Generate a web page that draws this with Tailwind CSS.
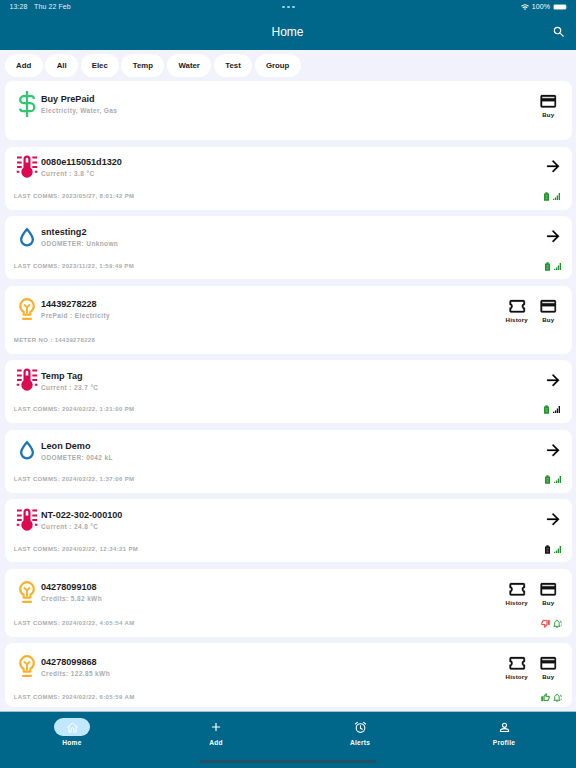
<!DOCTYPE html>
<html lang="en">
<head>
<meta charset="utf-8">
<title>Home</title>
<script src="https://cdn.jsdelivr.net/npm/@tailwindcss/browser@4"></script>
</head>
<body class="w-[576px] h-[768px] overflow-hidden bg-[#f1f2fb] font-['Liberation_Sans',Arial,sans-serif]">
<svg class="hidden" xmlns="http://www.w3.org/2000/svg">
  <symbol id="card" viewBox="0 0 24 24"><path d="M20,8H4V6H20M20,18H4V12H20M20,4H4C2.89,4 2,4.89 2,6V18C2,19.1 2.9,20 4,20H20A2,2 0 0,0 22,18V6C22,4.89 21.1,4 20,4Z" stroke="currentColor" stroke-width=".4"/></symbol>
  <symbol id="ticket" viewBox="0 0 24 24"><path d="M4,4A2,2 0 0,0 2,6V10A2,2 0 0,1 4,12A2,2 0 0,1 2,14V18A2,2 0 0,0 4,20H20A2,2 0 0,0 22,18V14A2,2 0 0,1 20,12A2,2 0 0,1 22,10V6A2,2 0 0,0 20,4H4M4,6H20V8.54C18.76,9.25 18,10.57 18,12C18,13.43 18.76,14.75 20,15.46V18H4V15.46C5.24,14.75 6,13.43 6,12C6,10.57 5.24,9.25 4,8.54V6Z" stroke="currentColor" stroke-width=".4"/></symbol>
  <symbol id="arrow" viewBox="0 0 24 24"><path d="M4,11V13H16L10.5,18.5L11.92,19.92L19.84,12L11.92,4.08L10.5,5.5L16,11H4Z" stroke="currentColor" stroke-width=".3"/></symbol>
  <symbol id="drop" viewBox="0 0 24 24"><path d="M12,3.77L11.25,4.61C11.25,4.61 9.97,6.06 8.68,7.94C7.39,9.82 6,12.07 6,14.23A6,6 0 0,0 12,20.23A6,6 0 0,0 18,14.23C18,12.07 16.61,9.82 15.32,7.94C14.03,6.06 12.75,4.61 12.75,4.61L12,3.77M12,6.9C12.44,7.42 12.84,7.85 13.68,9.07C14.89,10.83 16,13.07 16,14.23C16,16.45 14.22,18.23 12,18.23C9.78,18.23 8,16.45 8,14.23C8,13.07 9.11,10.83 10.32,9.07C11.16,7.85 11.56,7.42 12,6.9Z"/></symbol>
  <symbol id="bulb" viewBox="0 0 28 28"><g fill="none" stroke="currentColor" stroke-width="2.200"><path d="M10.600 19.600V16.800C8.500 15.500 7.200 13.400 7.200 11a6.800 6.800 0 0 1 13.600 0c0 2.400-1.300 4.500-3.400 5.800v2.800z" stroke-linejoin="round"/><path d="M14 18.500V12.500M11 9.500L14 12.500L17 9.500" stroke-width="1.900"/><path d="M10 23.800h8" stroke-linecap="round"/></g></symbol>
  <symbol id="temp" viewBox="0 0 28 28"><path fill-rule="evenodd" d="M14 2.400a3.500 3.500 0 0 1 3.500 3.500v8.600a5.700 5.700 0 1 1-7 0V5.900A3.500 3.500 0 0 1 14 2.400zm0 2.300a1.300 1.300 0 0 0-1.300 1.300v3.400h2.600V6A1.300 1.300 0 0 0 14 4.700z"/><path d="M4 4.500h4.700M4 9.400h4.700M4 14.100h4.700M3.700 18.800h2.600M19.300 4.500H24.200M19.300 9.400H24.200M19.300 14.100H24.200M21.900 18.800h2.500" stroke="currentColor" stroke-width="2" fill="none"/></symbol>
  <symbol id="dollar" viewBox="0 0 28 28"><path d="M14 1v26M20.800 9V8.500A2.500 2.500 0 0 0 18.300 6.200H10.700a3.500 3.500 0 0 0 0 7H17.300a4 4 0 0 1 0 8H9.700A2.700 2.700 0 0 1 7.100 18.700" fill="none" stroke="currentColor" stroke-width="2.300"/></symbol>
  <symbol id="battery" viewBox="0 0 12 16"><path d="M4 .5h4v2h2.500v13h-9v-13H4z"/><path d="M4 6h4M4 9h4M4 12h4" stroke="#fff" stroke-opacity=".5" stroke-width="1.300"/></symbol>
  <symbol id="signal" viewBox="0 0 14 14"><path d="M0 11.500h2.500V14H0zM3.800 9h2.600v5H3.800zM7.500 5h2.600v9H7.500zM11.300 0H14v14h-2.700z"/></symbol>
  <symbol id="up" viewBox="0 0 24 24"><path d="M5,9V21H1V9H5M9,21A2,2 0 0,1 7,19V9C7,8.45 7.22,7.95 7.590,7.590L14.170,1L15.230,2.060C15.500,2.330 15.670,2.700 15.670,3.110L15.640,3.430L14.690,8H21C22.110,8 23,8.900 23,10V12C23,12.260 22.950,12.500 22.860,12.730L19.840,19.780C19.540,20.500 18.830,21 18,21H9M9,19H18.030L21,12V10H12.210L13.340,4.680L9,9.030V19Z" stroke="currentColor" stroke-width=".8"/></symbol>
  <symbol id="down" viewBox="0 0 24 24"><path d="M19,15V3H23V15H19M15,3A2,2 0 0,1 17,5V15C17,15.550 16.780,16.050 16.410,16.410L9.830,23L8.770,21.940C8.500,21.670 8.330,21.300 8.330,20.880L8.360,20.570L9.310,16H3C1.890,16 1,15.100 1,14V12C1,11.740 1.050,11.500 1.140,11.270L4.160,4.220C4.460,3.500 5.170,3 6,3H15M15,5H5.970L3,12V14H11.780L10.650,19.320L15,14.970V5Z" stroke="currentColor" stroke-width=".8"/></symbol>
  <symbol id="bell" viewBox="0 0 24 24"><g fill="none" stroke="currentColor" stroke-width="2.400"><path d="M1.500 19.500h18M4.500 19V11c0-3.500 2.500-6 6-6.500s6 3 6 6.500v8M10.500 4.500V2"/><path d="M8.500 22h4M18.500 4c2.500 2 3.500 4 3.500 7M22 15v3" /></g></symbol>
</svg>
<div class="flex h-full flex-col">
  <header class="h-[50px] shrink-0 bg-[#00668a] text-white">
    <div class="grid h-[14px] grid-cols-3 items-center pl-[9.500px] pr-[8.500px] text-[7px] leading-[14px]">
      <div class="flex gap-[6.500px] text-[#e0f2fa] tracking-[0.1px]"><span>13:28</span><span>Thu 22 Feb</span></div>
      <div class="flex justify-center gap-[2px]"><i class="size-[2.700px] rounded-full bg-[#8fd3f0]"></i><i class="size-[2.700px] rounded-full bg-[#8fd3f0]"></i><i class="size-[2.700px] rounded-full bg-[#8fd3f0]"></i></div>
      <div class="flex items-center justify-end gap-[2.500px]">
        <svg class="h-[6px] w-[8px]" viewBox="0 0 16 12" fill="none" stroke="#fff" stroke-width="2.400"><path d="M1 4.500q7-6 14 0M3.600 7.600q4.400-3.700 8.800 0"/><path d="M8 12L5.500 9.700q2.500-1.800 5 0z" fill="#fff" stroke="none"/></svg>
        <span class="tracking-[0.1px]">100%</span>
        <svg class="h-[6px] w-[15px]" viewBox="0 0 15 6"><rect x=".4" y=".4" width="13" height="5.200" rx="1.600" fill="none" stroke="#7fb3c5" stroke-width=".6"/><rect x=".8" y=".7" width="12.200" height="4.600" rx="1.200" fill="#fff"/><path d="M14 2v2q.8-1 0-2" fill="#7fb3c5"/></svg>
      </div>
    </div>
    <div class="grid h-[36px] grid-cols-3 items-center">
      <span></span><h1 class="pr-[1px] text-center text-[12px] leading-[16px]">Home</h1>
      <svg class="mr-[10.500px] size-[14px] justify-self-end" viewBox="0 0 24 24" fill="#fff"><path d="M15.500 14h-.79l-.28-.27A6.471 6.471 0 0 0 16 9.500 6.500 6.500 0 1 0 9.500 16c1.610 0 3.090-.59 4.230-1.570l.27.28v.79l5 4.990L20.490 19l-4.990-5zm-6 0C7.010 14 5 11.990 5 9.500S7.010 5 9.500 5 14 7.010 14 9.500 11.990 14 9.500 14z"/></svg>
    </div>
  </header>
  <div class="flex h-[31px] shrink-0 items-center gap-[2.600px] pl-[4.600px] text-[7.800px] font-bold text-[#1c1c1e]">
    <span class="flex h-[23px] w-[38px] items-center justify-center rounded-full bg-white">Add</span>
    <span class="flex h-[23px] w-[33px] items-center justify-center rounded-full bg-white">All</span>
    <span class="flex h-[23px] w-[38px] items-center justify-center rounded-full bg-white">Elec</span>
    <span class="flex h-[23px] w-[43px] items-center justify-center rounded-full bg-white">Temp</span>
    <span class="flex h-[23px] w-[44.500px] items-center justify-center rounded-full bg-white">Water</span>
    <span class="flex h-[23px] w-[38px] items-center justify-center rounded-full bg-white">Test</span>
    <span class="flex h-[23px] w-[46px] items-center justify-center rounded-full bg-white">Group</span>
  </div>
  <main id="list" class="flex min-h-0 flex-1 flex-col gap-[6.600px] overflow-hidden pl-[4.500px] pr-[4.500px]"></main>
  <nav class="h-[57px] shrink-0 border-t border-[#9cc3d1] bg-[#00668a] text-white">
    <div class="grid h-[48px] grid-cols-4 pt-[6px] text-center text-[6.600px] font-bold tracking-[0.25px]">
      <div class="flex flex-col items-center gap-[2px]"><span class="flex h-[18px] w-[36px] items-center justify-center rounded-full bg-[#c2e8ff]"><svg class="size-[13px]" viewBox="0 0 24 24" fill="none" stroke="#fff" stroke-width="1.800"><path d="M2.500 12L12 3.500L21.500 12M5.500 10v10.500h4V15a2.500 2.500 0 0 1 5 0v5.500h4V10"/></svg></span><span class="leading-[9px]">Home</span></div>
      <div class="flex flex-col items-center gap-[2px]"><span class="flex h-[18px] items-center"><svg class="size-[14px]" viewBox="0 0 24 24" fill="#fff"><path d="M19 13h-6v6h-2v-6H5v-2h6V5h2v6h6z"/></svg></span><span class="leading-[9px]">Add</span></div>
      <div class="flex flex-col items-center gap-[2px]"><span class="flex h-[18px] items-center"><svg class="size-[13px]" viewBox="0 0 24 24" fill="none" stroke="#fff" stroke-width="2"><circle cx="12" cy="13" r="8"/><path d="M12 8v5.500l4 2.300M2 6l4.800-4M22 6l-4.800-4"/></svg></span><span class="leading-[9px]">Alerts</span></div>
      <div class="flex flex-col items-center gap-[2px]"><span class="flex h-[18px] items-center"><svg class="size-[13px]" viewBox="0 0 24 24" fill="none" stroke="#fff" stroke-width="2"><circle cx="12" cy="8" r="3.700"/><path d="M4.500 19.500V18c0-2.600 4.500-4 7.500-4s7.500 1.400 7.500 4v1.500z"/></svg></span><span class="leading-[9px]">Profile</span></div>
    </div>
    <div class="mx-auto h-[3px] w-[176px] rounded-full bg-[#254f62]"></div>
  </nav>
</div>
<script>
const red = 'text-[#dc0a50]', blue = 'text-[#1c74b8]', amber = 'text-[#f9b02c]', green = 'text-[#1f9428]', black = 'text-[#111111]', alert = 'text-[#ee3a36]';
const items = [
  { icon: 'dollar', tone: 'text-[#2fc872]', title: 'Buy PrePaid', sub: 'Electricity, Water, Gas', foot: '', h: 59.200, actions: ['Buy'], status: [] },
  { icon: 'temp', tone: red, title: '0080e115051d1320', sub: 'Current : 3.8 °C', foot: 'LAST COMMS: 2023/05/27, 8:01:42 PM', h: 63, status: [['battery', green], ['signal', green]], inset: 12 },
  { icon: 'drop', tone: blue, title: 'sntesting2', sub: 'ODOMETER: Unknown', foot: 'LAST COMMS: 2023/11/22, 1:59:49 PM', h: 63, status: [['battery', green], ['signal', green]], inset: 11 },
  { icon: 'bulb', tone: amber, title: '14439278228', sub: 'PrePaid : Electricity', foot: 'METER NO : 14439278228', h: 67.700, actions: ['History', 'Buy'], status: [] },
  { icon: 'temp', tone: red, title: 'Temp Tag', sub: 'Current : 23.7 °C', foot: 'LAST COMMS: 2024/02/22, 1:21:00 PM', h: 63, status: [['battery', green], ['signal', black]], inset: 12 },
  { icon: 'drop', tone: blue, title: 'Leon Demo', sub: 'ODOMETER: 0042 kL', foot: 'LAST COMMS: 2024/02/22, 1:37:06 PM', h: 63, status: [['battery', green], ['signal', green]], inset: 11 },
  { icon: 'temp', tone: red, title: 'NT-022-302-000100', sub: 'Current : 24.8 °C', foot: 'LAST COMMS: 2024/02/22, 12:34:21 PM', h: 63, status: [['battery', black], ['signal', green]], inset: 11 },
  { icon: 'bulb', tone: amber, title: '04278099108', sub: 'Credits: 5.82 kWh', foot: 'LAST COMMS: 2024/02/22, 4:05:54 AM', h: 67.600, actions: ['History', 'Buy'], status: [['down', alert], ['bell', green]], inset: 9.500 },
  { icon: 'bulb', tone: amber, title: '04278099868', sub: 'Credits: 122.85 kWh', foot: 'LAST COMMS: 2024/02/22, 6:05:59 AM', h: 64, actions: ['History', 'Buy'], status: [['up', green], ['bell', green]], inset: 9.500 },
];
const sizes = { battery: 'h-[9px] w-[7px]', signal: 'size-[7px]', up: 'size-[9px]', down: 'size-[9px]', bell: 'size-[9px]' };
const svg = (id, cls) => `<svg class="fill-current ${cls}"><use href="#${id}"/></svg>`;
document.getElementById('list').innerHTML = items.map(i => {
  const pay = !!i.actions;
  const right = pay
    ? `<div class="-mt-[2.700px] flex pr-[7.500px] text-[#111111]">${i.actions.map(a => `<div class="flex w-[31.500px] flex-col items-center">${svg(a === 'Buy' ? 'card' : 'ticket', 'size-[18.500px]')}<span class="text-[6.100px] leading-[9px] font-bold tracking-[0.2px]">${a}</span></div>`).join('')}</div>`
    : `<div class="pr-[9.200px] text-black">${svg('arrow', 'size-[18.500px]')}</div>`;
  return `<article class="flex shrink-0 flex-col rounded-[8px] bg-white pl-[9.300px] ${pay ? 'pt-[13.400px]' : 'pt-[10.700px]'}" style="height:${i.h}px">
    <div class="flex h-[22px] items-start">
      <div class="flex h-[22px] w-[27.200px] shrink-0 items-center justify-center ${i.tone}">${svg(i.icon, 'size-[28px] shrink-0 -mt-[3px]')}</div>
      <div class="flex-1 font-bold"><h2 class="text-[9.100px] leading-[11px] text-[#1c1c1e]">${i.title}</h2><p class="text-[6.500px] leading-[11px] tracking-[0.38px] text-[#acacac]">${i.sub}</p></div>
      ${right}
    </div>
    <div class="flex h-[11px] items-center justify-between ${pay ? 'mt-[13.500px]' : 'mt-[11.500px]'}">
      <span class="text-[6px] font-bold tracking-[0.350px] text-[#acacac]">${i.foot}</span>
      <span class="flex items-center gap-[3px]" style="padding-right:${i.inset || 0}px">${i.status.map(([id, c]) => svg(id, sizes[id] + ' ' + c)).join('')}</span>
    </div>
  </article>`;
}).join('');
</script>
</body>
</html>
